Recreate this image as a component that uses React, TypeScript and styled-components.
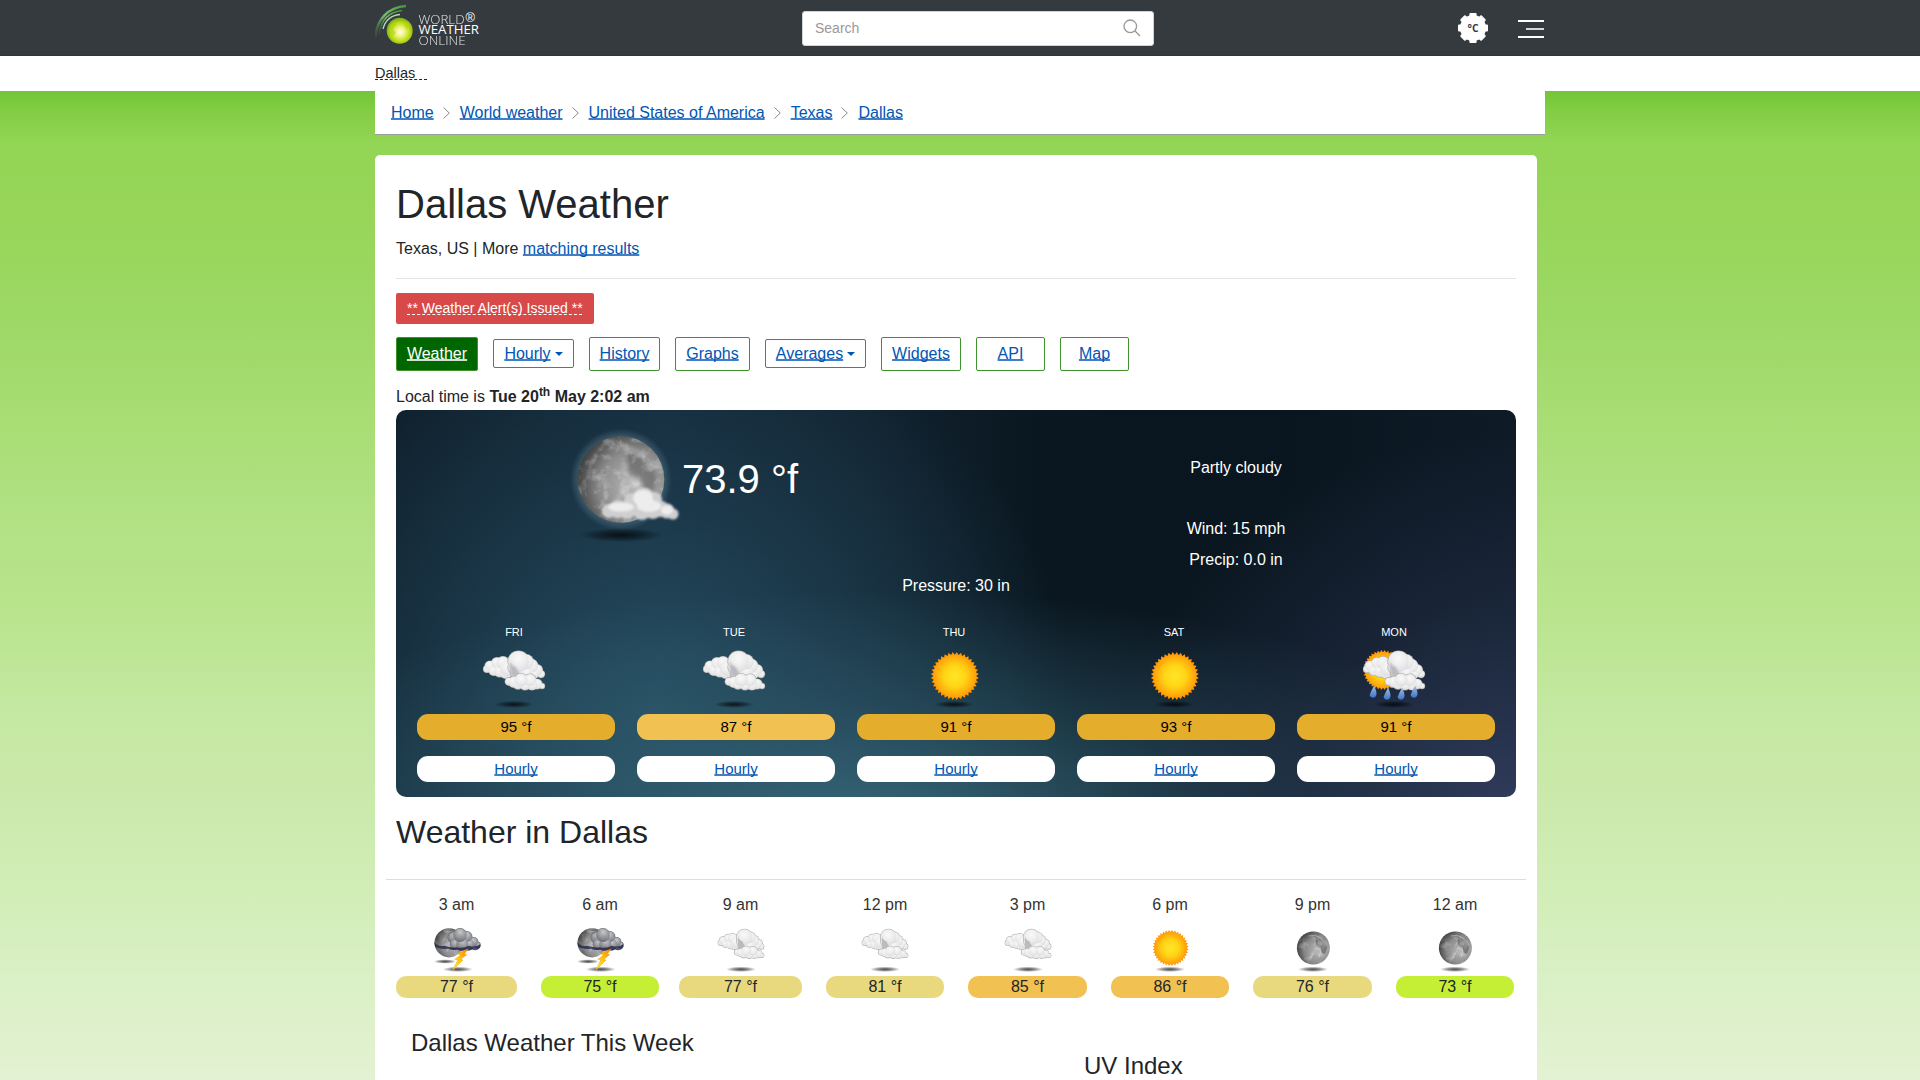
import React from "react";
import styled, { createGlobalStyle } from "styled-components";

const Global = createGlobalStyle`
  *, *::before, *::after { box-sizing: border-box; }
  html, body { margin: 0; height: 1080px; overflow: hidden; }
  body {
    font-family: "Liberation Sans", Arial, sans-serif;
    font-size: 16px;
    line-height: 24px;
    color: #212529;
  }
`;

const Page = styled.div`
  height: 1080px;
  overflow: hidden;
  display: flex;
  flex-direction: column;
`;

const Wrap = styled.div`
  width: 1170px;
  margin: 0 auto;
`;

const Header = styled.header`
  height: 56px;
  flex: none;
  background: #353a3e;
  border-bottom: 1px solid #2f3437;
`;

const HeaderInner = styled(Wrap)`
  height: 56px;
  display: grid;
  grid-template-columns: 427px 352px 1fr auto auto;
  align-items: start;
`;

const SearchBox = styled.div`
  height: 35px;
  margin-top: 11px;
  padding: 0 12px 1px 12px;
  border: 1px solid #ced4da;
  border-radius: 3px;
  background: #fff;
  display: flex;
  align-items: center;
  justify-content: space-between;
  font-size: 14px;
  color: #999;
`;

const UnitButton = styled.div`
  grid-column: 4;
  margin: 13px 30px 0 0;
  height: 30px;
`;

const MenuButton = styled.div`
  width: 26px;
  height: 18px;
  margin: 20px 1px 0 0;
  display: flex;
  flex-direction: column;
  align-items: flex-end;
  justify-content: space-between;
`;

const MenuLine = styled.span<{ $short?: boolean }>`
  width: ${(p) => (p.$short ? 18 : 26)}px;
  height: 2px;
  background: ${(p) => (p.$short ? "#d4d6d7" : "#fff")};
`;

const PlaceBar = styled.div`
  height: 35px;
  flex: none;
  background: #fff;
  font-size: 14.5px;
  line-height: 34px;
`;

const Dashed = styled.span`
  white-space: pre;
  text-decoration: underline dashed 1px;
  text-underline-offset: 1px;
  text-decoration-skip-ink: none;
`;

const Main = styled.main`
  flex: 1;
  min-height: 0;
  background: linear-gradient(
    #73c536 0,
    #82cd44 20px,
    #93d554 52px,
    #97d558 110px,
    #9cd864 220px,
    #a7dd73 320px,
    #b2e184 430px,
    #bae58e 530px,
    #c4e8a2 620px,
    #cae9aa 700px,
    #d3eeb9 811px,
    #dbf0c7 900px,
    #e3f2d3 989px
  );
`;

const Crumbs = styled(Wrap)`
  height: 44px;
  padding-left: 16px;
  background: #fff;
  border-bottom: 1px solid #999f9c;
  display: flex;
  align-items: center;
`;

const Link = styled.span`
  color: #0056b3;
  text-decoration: underline 2px #3f7fc9;
  text-underline-offset: 0px;
  text-decoration-skip-ink: none;
`;

const Card = styled.section`
  width: 1162px;
  height: 1000px;
  margin-top: 20px;
  padding: 0 21px;
  background: #fff;
  border-radius: 5px;
`;

const Title = styled.h1`
  margin: 0;
  padding-top: 25px;
  font-size: 40px;
  font-weight: 400;
  line-height: 48px;
`;

const SubTitle = styled.div`
  margin-top: 9px;
  height: 42px;
  border-bottom: 1px solid #e3e4e5;
  line-height: 24px;
`;

const Alert = styled.div`
  width: 198px;
  height: 31px;
  margin-top: 14px;
  padding-left: 11px;
  border-radius: 2px;
  background: #d84a49;
  color: #fff;
  font-size: 14px;
  line-height: 31px;
`;

const Tabs = styled.nav`
  height: 34px;
  margin-top: 13px;
  display: flex;
  align-items: center;
  gap: 15px;
`;

const Tab = styled.div<{ $w: number; $active?: boolean; $menu?: boolean }>`
  width: ${(p) => p.$w}px;
  height: ${(p) => (p.$menu ? 29 : 34)}px;
  margin-bottom: ${(p) => (p.$menu ? 1 : 0)}px;
  border: 1px solid #3f922c;
  border-radius: 2px;
  background: ${(p) => (p.$active ? "#060" : "#fff")};
  display: flex;
  align-items: center;
  justify-content: center;
  ${Link} {
    ${(p) => (p.$active ? "color: #fff; text-decoration-color: #cfe2cf;" : "")}
  }
`;

const Caret = styled.i`
  margin-left: 4px;
  border: 4.5px solid transparent;
  border-top-color: #0056b3;
  border-bottom: 0;
`;

const LocalTime = styled.div`
  height: 39px;
  padding-top: 14px;
  sup {
    font-size: 12px;
    line-height: 0;
    position: relative;
    top: 0;
  }
`;

const Panel = styled.div`
  height: 387px;
  border-radius: 10px;
  color: #fff;
  padding: 0 8px;
  background:
    radial-gradient(ellipse 420px 380px at 100% 104%, rgba(50, 62, 94, 0.95), rgba(38, 50, 76, 0.55) 50%, rgba(28, 36, 58, 0) 100%),
    radial-gradient(ellipse 680px 230px at 42% 106%, rgba(56, 106, 124, 0.9), rgba(48, 92, 110, 0.5) 50%, rgba(40, 80, 100, 0) 100%),
    radial-gradient(ellipse 420px 400px at 23% 78%, rgba(40, 82, 102, 0.9), rgba(33, 68, 87, 0.6) 50%, rgba(20, 42, 58, 0) 100%),
    linear-gradient(90deg, #0f1f2b 0, #14293a 24%, #11222f 42%, #0a1720 58%, #0a161f 80%, #0e1a26 100%);
`;

const Current = styled.div`
  display: grid;
  grid-template-columns: 552px 552px;
  height: 161px;
`;

const Now = styled.div`
  display: flex;
  padding-left: 161px;
`;

const Temp = styled.div`
  margin: 39px 0 0 -11px;
  font-size: 40px;
  line-height: 60px;
  white-space: nowrap;
`;

const Facts = styled.div`
  padding: 46px 0 0 8px;
  text-align: center;
`;

const Fact = styled.div<{ $gap?: number }>`
  line-height: 24px;
  margin-bottom: ${(p) => p.$gap ?? 0}px;
`;

const Pressure = styled.div`
  text-align: center;
  line-height: 24px;
  height: 52px;
  padding-top: 3px;
`;

const Days = styled.div`
  display: grid;
  grid-template-columns: repeat(5, 220px);
`;

const Day = styled.div`
  display: flex;
  flex-direction: column;
  align-items: center;
`;

const DayName = styled.div`
  font-size: 11px;
  line-height: 18px;
  height: 21px;
`;

const Pill = styled.div<{ $bg: string }>`
  width: 198px;
  height: 26px;
  margin-left: 4px;
  border-radius: 11px;
  background: ${(p) => p.$bg};
  color: #000;
  font-size: 15px;
  line-height: 26px;
  text-align: center;
`;

const DayIcon = styled.div`
  height: 70px;
  width: 64px;
`;

const Spacer = styled.div`
  height: 16px;
`;

const Heading = styled.h2`
  margin: 0;
  padding-top: 16px;
  height: 82px;
  font-size: 32px;
  font-weight: 400;
  line-height: 38px;
`;

const Hours = styled.div`
  margin: 0 -10px;
  padding: 15px 10px 0;
  height: 136px;
  border-top: 1px solid #dcdddf;
  display: flex;
`;

const Hour = styled.div<{ $w: number; $gap: number }>`
  width: ${(p) => p.$w}px;
  margin-right: ${(p) => p.$gap}px;
  flex: none;
  display: flex;
  flex-direction: column;
  align-items: center;
`;

const HourName = styled.div`
  line-height: 20px;
  height: 29px;
  color: #333;
`;

const HourIcon = styled.div`
  height: 52px;
  width: 48px;
`;

const HourTemp = styled.div<{ $bg: string }>`
  width: 100%;
  height: 22px;
  border-radius: 10px;
  background: ${(p) => p.$bg};
  line-height: 21px;
  text-align: center;
`;

const Columns = styled.div`
  display: grid;
  grid-template-columns: 673px 1fr;
  padding-left: 15px;
`;

const SmallHeading = styled.h3<{ $top: number }>`
  margin: 0;
  padding-top: ${(p) => p.$top}px;
  font-size: 24px;
  font-weight: 400;
  line-height: 29px;
`;

/* ---------- drawings ---------- */

const Defs = () => (
  <svg width="0" height="0" style={{ display: "block" }}>
    <defs>
      <radialGradient id="sun">
        <stop offset="0" stopColor="#ffe628" />
        <stop offset=".45" stopColor="#ffd515" />
        <stop offset=".85" stopColor="#ffa50a" />
        <stop offset="1" stopColor="#ff8a00" />
      </radialGradient>
      <radialGradient id="puff" cx=".48" cy=".35" r=".66">
        <stop offset="0" stopColor="#f9f9f9" />
        <stop offset=".6" stopColor="#ececec" />
        <stop offset="1" stopColor="#dddcdf" />
      </radialGradient>
      <radialGradient id="puffDark" cx=".48" cy=".3" r=".7">
        <stop offset="0" stopColor="#c6c7ca" />
        <stop offset=".5" stopColor="#96979c" />
        <stop offset="1" stopColor="#6a6b73" />
      </radialGradient>
      <radialGradient id="moon" cx=".66" cy=".58" r=".68">
        <stop offset="0" stopColor="#b9b9b9" />
        <stop offset=".6" stopColor="#8b8b8b" />
        <stop offset="1" stopColor="#3f3f3f" />
      </radialGradient>
      <radialGradient id="halo">
        <stop offset=".84" stopColor="#8fb4c5" stopOpacity=".26" />
        <stop offset="1" stopColor="#8fb4c5" stopOpacity="0" />
      </radialGradient>
      <radialGradient id="shade">
        <stop offset="0" stopColor="#000" stopOpacity=".72" />
        <stop offset=".5" stopColor="#000" stopOpacity=".42" />
        <stop offset="1" stopColor="#000" stopOpacity="0" />
      </radialGradient>
      <linearGradient id="drop" x2="0" y2="1">
        <stop offset="0" stopColor="#a8bedd" />
        <stop offset="1" stopColor="#3c74cf" />
      </linearGradient>
      <linearGradient id="bolt" x1="1" x2="0" y2="1">
        <stop offset="0" stopColor="#ff7d0c" />
        <stop offset=".5" stopColor="#ffc40c" />
        <stop offset="1" stopColor="#fff03a" />
      </linearGradient>
      <radialGradient id="globe" cx=".52" cy=".55" r=".55">
        <stop offset="0" stopColor="#ffffe8" />
        <stop offset=".3" stopColor="#f0f588" />
        <stop offset=".65" stopColor="#c3dc14" />
        <stop offset="1" stopColor="#6fae1c" />
      </radialGradient>
      <linearGradient id="arc" x1="0" x2="1" y1="1" y2="0">
        <stop offset="0" stopColor="#3c8c35" stopOpacity=".15" />
        <stop offset=".5" stopColor="#7cba74" />
        <stop offset="1" stopColor="#3f9a36" />
      </linearGradient>
      <filter id="soft" x="-20%" y="-20%" width="140%" height="140%">
        <feGaussianBlur stdDeviation="1" />
      </filter>
      <filter id="crater" x="0" y="0" width="100%" height="100%">
        <feTurbulence type="fractalNoise" baseFrequency=".09" numOctaves="4" seed="8" />
        <feColorMatrix values="0 0 0 0 1  0 0 0 0 1  0 0 0 0 1  3.4 0 0 0 -1.6" />
        <feComposite in2="SourceGraphic" operator="in" />
      </filter>
    </defs>
  </svg>
);

const Shadow = ({ cx = 32, cy = 60.4, rx = 20, ry = 3.6 }) => (
  <ellipse cx={cx} cy={cy} rx={rx} ry={ry} fill="url(#shade)" />
);

const sunPoints = (cx: number, cy: number, r: number) =>
  Array.from({ length: 72 }, (_, i) => {
    const a = (i / 72) * Math.PI * 2;
    const d = i % 2 ? r : r - r * 0.11;
    return `${(cx + d * Math.cos(a)).toFixed(2)},${(cy + d * Math.sin(a)).toFixed(2)}`;
  }).join(" ");

const SunDisc = ({ cx = 32.8, cy = 32, r = 24 }) => (
  <polygon points={sunPoints(cx, cy, r)} fill="url(#sun)" />
);

type Puff = [number, number, number];

const leftPuffs: Puff[] = [
  [5, 25, 3.5], [8, 22, 5], [12, 26, 5.5], [15, 19, 5.5], [18, 27, 6], [24, 28, 6.5], [21, 19, 6.5], [26, 24, 8],
];
const rightPuffs: Puff[] = [
  [59, 30, 3.6], [55, 26, 5.5], [52, 30, 4.5], [49, 22, 7], [44, 28, 7], [34, 29, 5.5], [33, 23, 7], [44, 18, 7.5], [36.5, 17.5, 10.5],
];
const frontPuffs: Puff[] = [
  [60, 42, 2.6], [55, 40, 5], [27, 37.5, 3.8], [32, 38, 5.5], [50, 40.5, 5.5], [36, 40.5, 4.6], [43, 41, 5], [48, 36, 6], [39, 36, 6.5],
];

const PuffGroup = ({ list, fill, edge }: { list: Puff[]; fill: string; edge: string }) => (
  <g>
    {list.map(([x, y, r], i) => (
      <circle key={`e${i}`} cx={x} cy={y} r={r + 0.6} fill={edge} />
    ))}
    {list.map(([x, y, r], i) => (
      <circle key={i} cx={x} cy={y} r={r} fill={fill} />
    ))}
  </g>
);

const CloudShape = () => (
  <g>
    <PuffGroup list={leftPuffs} fill="url(#puff)" edge="#aaa8a6" />
    <PuffGroup list={rightPuffs} fill="url(#puff)" edge="#aaa8a6" />
    <path d="M28 17Q27 27 30 34L43 33Q36 30 34 23Q30 22 28 17Z" fill="#a09eaa" opacity=".6" filter="url(#soft)" />
    <PuffGroup list={frontPuffs} fill="url(#puff)" edge="#aaa8a6" />
  </g>
);

const MoonDisc = ({ cx = 32.5, cy = 32, r = 22 }) => (
  <g>
    <circle cx={cx} cy={cy} r={r} fill="url(#moon)" />
    <g transform={`translate(${cx} ${cy}) scale(${r / 22})`} filter="url(#soft)">
      <path d="M3 -15Q9 -16 11 -9Q17 -8 18 0Q17 7 14 8Q9 5 10 -1Q3 -2 3 -8Z" fill="#4f4f4f" opacity=".5" />
      <path d="M0 -3L3 -8M3 0L10 3L8 12M-4 14L2 4M-6 -16L2 -17L12 -12" stroke="#eee" strokeWidth="1" opacity=".5" fill="none" />
    </g>
    <circle cx={cx} cy={cy} r={r} fill="#fff" opacity=".28" filter="url(#crater)" />
  </g>
);

type Kind = "cloud" | "sun" | "shower" | "storm" | "moon";

const stormPuffs: Puff[] = [
  [59, 28, 4], [54, 24, 6], [48, 27, 7], [45, 17, 7], [27, 18, 7], [30, 27, 7], [39, 27, 8], [36, 15, 9],
];

const WeatherIcon = ({ kind, size }: { kind: Kind; size: number }) => (
  <svg width={size} height={size} viewBox="0 0 64 64" style={{ display: "block" }}>
    {kind === "cloud" && (
      <>
        <Shadow />
        <CloudShape />
      </>
    )}
    {kind === "sun" && (
      <>
        <Shadow />
        <SunDisc />
      </>
    )}
    {kind === "moon" && (
      <>
        <Shadow />
        <MoonDisc />
      </>
    )}
    {kind === "shower" && (
      <>
        <Shadow />
        <SunDisc cx={21} cy={26} r={20} />
        <CloudShape />
        {[11, 25, 39, 52].map((x, i) => (
          <path
            key={x}
            d="M1 0Q4 6 3.4 9.500A3.500 3.500 0 0 1 -3.400 9.500Q-2 6 1 0Z"
            transform={`translate(${x} ${i % 3 ? 43.5 : 41.5})`}
            fill="url(#drop)"
          />
        ))}
      </>
    )}
    {kind === "storm" && (
      <>
        <Shadow cx={33} />
        <Shadow cx={16} cy={50} rx={15} ry={3} />
        <MoonDisc cx={21.500} cy={25} r={19.500} />
        <g opacity=".9">
          <PuffGroup list={stormPuffs} fill="url(#puffDark)" edge="#5d5e68" />
        </g>
        <path
          d="M1 23Q4 31 15 29Q24 32 32 31Q40 33 48 29Q56 32 63 27Q64 32 60 34Q56 36 52 34Q47 37 42 35Q36 37 32 34Q26 36 20 33Q8 34 3 30Z"
          fill="#23244a"
          opacity=".8"
        />
        <path d="M47 33L33 39L36 42L29 47L33 48L26 62L40 48L37 47L45 41L42 40Z" fill="url(#bolt)" stroke="#e89a10" strokeWidth=".5" />
      </>
    )}
  </svg>
);

const nowPuffs: Puff[] = [
  [108, 98, 5.5], [102, 95, 7.5], [44, 95, 7], [53, 93, 9], [62, 94, 9], [96, 93, 8], [88, 94, 9], [68, 86, 9], [77, 95, 9], [89, 84, 8], [79, 82, 10.5],
];

const NowIcon = () => (
  <svg width="128" height="128" viewBox="0 0 128 128" style={{ display: "block", marginTop: 6 }}>
    <ellipse cx="56" cy="119" rx="42" ry="7" fill="url(#shade)" />
    <circle cx="56" cy="63.500" r="51" fill="url(#halo)" />
    <MoonDisc cx={56} cy={63.500} r={43.300} />
    <g filter="url(#soft)">
      {nowPuffs.map(([x, y, r]) => (
        <circle key={x} cx={x} cy={y} r={r} fill="#cfcfd0" />
      ))}
    </g>
    <g filter="url(#soft)" fill="#fafafa" opacity=".7">
      <ellipse cx="56" cy="91" rx="13" ry="4.500" />
      <ellipse cx="78" cy="82" rx="10" ry="8" />
      <ellipse cx="84" cy="90" rx="12" ry="6" />
      <ellipse cx="102" cy="94" rx="6" ry="4.500" />
    </g>
  </svg>
);

const Logo = () => (
  <svg width="110" height="50" viewBox="0 0 110 50" style={{ display: "block" }}>
    <g fill="none" stroke="url(#arc)">
      <path d="M0.500 38C1 20 13 7 31 6" strokeWidth="2.400" />
      <path d="M4 34C6 20 14 12 27 10.500" strokeWidth="1.500" />
      <path d="M8 29C10 21 15 15.500 25 14.500" strokeWidth="1.300" stroke="#b9d3b8" />
    </g>
    <circle cx="24.700" cy="30.700" r="13" fill="url(#globe)" />
    <path d="M15 25L20 21L22 24L18 29L21 33L18 36L14 31ZM28 22L33 22L35 27L31 29Z" fill="#b3d416" opacity=".55" />
    <g fill="#fff" fontFamily="'Open Sans', 'Noto Sans', sans-serif" fontSize="13">
      <text x="43.500" y="23.500" fontWeight="300" textLength="46" lengthAdjust="spacingAndGlyphs" opacity=".85">WORLD</text>
      <text x="90.500" y="21.500" fontSize="12" fontFamily="'Liberation Sans', sans-serif" textLength="9.500" lengthAdjust="spacingAndGlyphs">®</text>
      <text x="43.500" y="34" fontWeight="400" textLength="60.500" lengthAdjust="spacingAndGlyphs">WEATHER</text>
      <text x="43.500" y="44.800" fontWeight="300" textLength="47" lengthAdjust="spacingAndGlyphs" opacity=".85">ONLINE</text>
    </g>
  </svg>
);

const Gear = () => (
  <svg width="30" height="30" viewBox="0 0 30 30" style={{ display: "block" }}>
    <g fill="#fff">
      <circle cx="15" cy="15" r="13" />
      {[0, 45, 90, 135].map((a) => (
        <rect key={a} x="11.400" y="0" width="7.200" height="30" rx="1" transform={`rotate(${a} 15 15)`} />
      ))}
    </g>
    <text x="9.500" y="19" fontSize="10.500" fontWeight="700" fontFamily="'Open Sans', sans-serif" fill="#353a3e" textLength="11" lengthAdjust="spacingAndGlyphs">°C</text>
  </svg>
);

const Magnifier = () => (
  <svg width="18" height="18" viewBox="0 0 18 18" fill="none" stroke="#999" strokeWidth="1.300">
    <circle cx="7.300" cy="7.300" r="6.300" />
    <path d="M11.800 11.800L17 17" />
  </svg>
);

const CrumbArrow = styled.svg`
  margin: 0 10px 0 9px;
  flex: none;
`;

const Chevron = () => (
  <CrumbArrow width="7" height="12" viewBox="0 0 7 12" fill="none" stroke="#888" strokeWidth="1">
    <path d="M.5 .5L6.300 6L.5 11.500" />
  </CrumbArrow>
);

/* ---------- data ---------- */

const crumbs = ["Home", "World weather", "United States of America", "Texas", "Dallas"];

const tabs = [
  { name: "Weather", w: 82, active: true },
  { name: "Hourly", w: 81, menu: true },
  { name: "History", w: 71 },
  { name: "Graphs", w: 75 },
  { name: "Averages", w: 101, menu: true },
  { name: "Widgets", w: 80 },
  { name: "API", w: 69 },
  { name: "Map", w: 69 },
];

const days: { name: string; kind: Kind; temp: number; bg: string }[] = [
  { name: "FRI", kind: "cloud", temp: 95, bg: "#e4ad2c" },
  { name: "TUE", kind: "cloud", temp: 87, bg: "#f1c152" },
  { name: "THU", kind: "sun", temp: 91, bg: "#e4ad2c" },
  { name: "SAT", kind: "sun", temp: 93, bg: "#e4ad2c" },
  { name: "MON", kind: "shower", temp: 91, bg: "#e4ad2c" },
];

const hours: { name: string; kind: Kind; temp: number; bg: string; w: number; gap: number }[] = [
  { name: "3 am", kind: "storm", temp: 77, bg: "#e8d97f", w: 121, gap: 24 },
  { name: "6 am", kind: "storm", temp: 75, bg: "#c4ef35", w: 118, gap: 20 },
  { name: "9 am", kind: "cloud", temp: 77, bg: "#e8d97f", w: 123, gap: 24 },
  { name: "12 pm", kind: "cloud", temp: 81, bg: "#e8d97f", w: 118, gap: 24 },
  { name: "3 pm", kind: "cloud", temp: 85, bg: "#f1c152", w: 119, gap: 24 },
  { name: "6 pm", kind: "sun", temp: 86, bg: "#f1c152", w: 118, gap: 24 },
  { name: "9 pm", kind: "moon", temp: 76, bg: "#e8d97f", w: 119, gap: 24 },
  { name: "12 am", kind: "moon", temp: 73, bg: "#c4ef35", w: 118, gap: 0 },
];

export default function App() {
  return (
    <Page>
      <Global />
      <Defs />
      <Header>
        <HeaderInner>
          <Logo />
          <SearchBox>
            Search
            <Magnifier />
          </SearchBox>
          <UnitButton>
            <Gear />
          </UnitButton>
          <MenuButton>
            <MenuLine />
            <MenuLine $short />
            <MenuLine />
          </MenuButton>
        </HeaderInner>
      </Header>
      <PlaceBar>
        <Wrap>
          <Dashed>{"Dallas\u00a0\u00a0\u00a0"}</Dashed>
        </Wrap>
      </PlaceBar>
      <Main>
        <Crumbs>
          {crumbs.map((c, i) => (
            <React.Fragment key={c}>
              {i > 0 && <Chevron />}
              <Link>{c}</Link>
            </React.Fragment>
          ))}
        </Crumbs>
        <Wrap>
          <Card>
            <Title>Dallas Weather</Title>
            <SubTitle>
              Texas, US | More <Link>matching results</Link>
            </SubTitle>
            <Alert>
              <Dashed>** Weather Alert(s) Issued **</Dashed>
            </Alert>
            <Tabs>
              {tabs.map((t) => (
                <Tab key={t.name} $w={t.w} $active={t.active} $menu={t.menu}>
                  <Link>{t.name}</Link>
                  {t.menu && <Caret />}
                </Tab>
              ))}
            </Tabs>
            <LocalTime>
              Local time is{" "}
              <b>
                Tue 20<sup>th</sup> May 2:02 am
              </b>
            </LocalTime>
            <Panel>
              <Current>
                <Now>
                  <NowIcon />
                  <Temp>73.9 °f</Temp>
                </Now>
                <Facts>
                  <Fact $gap={37}>Partly cloudy</Fact>
                  <Fact $gap={7}>Wind: 15 mph</Fact>
                  <Fact>Precip: 0.0 in</Fact>
                </Facts>
              </Current>
              <Pressure>Pressure: 30 in</Pressure>
              <Days>
                {days.map((d) => (
                  <Day key={d.name}>
                    <DayName>{d.name}</DayName>
                    <DayIcon>
                      <WeatherIcon kind={d.kind} size={64} />
                    </DayIcon>
                    <Pill $bg={d.bg}>{d.temp} °f</Pill>
                    <Spacer />
                    <Pill $bg="#fff">
                      <Link>Hourly</Link>
                    </Pill>
                  </Day>
                ))}
              </Days>
            </Panel>
            <Heading>Weather in Dallas</Heading>
            <Hours>
              {hours.map((h) => (
                <Hour key={h.name} $w={h.w} $gap={h.gap}>
                  <HourName>{h.name}</HourName>
                  <HourIcon>
                    <WeatherIcon kind={h.kind} size={48} />
                  </HourIcon>
                  <HourTemp $bg={h.bg}>{h.temp} °f</HourTemp>
                </Hour>
              ))}
            </Hours>
            <Columns>
              <SmallHeading $top={13}>Dallas Weather This Week</SmallHeading>
              <SmallHeading $top={36}>UV Index</SmallHeading>
            </Columns>
          </Card>
        </Wrap>
      </Main>
    </Page>
  );
}
